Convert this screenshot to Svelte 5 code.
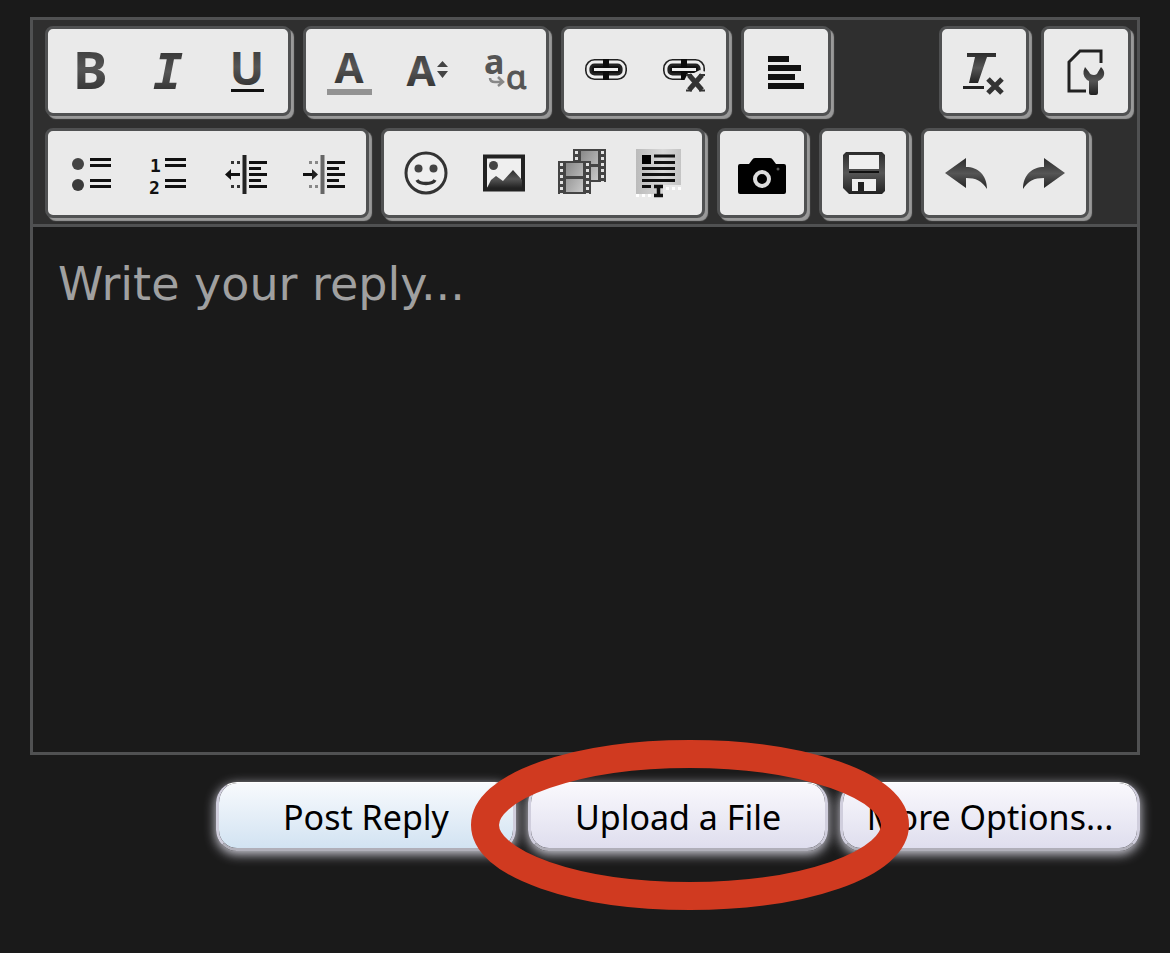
<script>
  // Every icon is drawn on a 78-unit canvas whose origin is the middle of its button.
  const chain = `
    <rect x="-17.500" y="-8.500" width="35" height="14" rx="6" fill="#111" stroke="#222" stroke-width="7"/>
    <rect x="-18" y="-9" width="36" height="15" rx="6.500" fill="none" stroke="#eee" stroke-width="2.800"/>
    <rect x="-3" y="-12" width="6" height="21" fill="#0c0c0c"/>
    <rect x="-12" y="-3" width="24" height="3" fill="#eee"/>`;
  const textLines = `<path d="M3-10.5H21M3-4.5H15M3 1.5H21M3 7.5H15M3 13.5H21" stroke="#111" stroke-width="3"/>`;
  const film = `
    <rect width="33" height="33" fill="#444"/>
    <path d="M8 2H25V15H8ZM8 18H25V31H8Z" fill="url(#frame)"/>
    <path d="M3.500 2V33M29.500 2V33" stroke="#e2e2e2" stroke-width="3" stroke-dasharray="3 3"/>`;
  const arrow = `<path d="M-21 0L0-15V-6C12-6 21 2 21 16C16 8 10 5 0 5V15Z" fill="url(#ink)"/>`;
  const sans = `font-family="Noto Sans, Open Sans, sans-serif" font-weight="700"`;
  const mono = `font-family="DejaVu Sans Mono, monospace" font-weight="700"`;

  const icons = {
    bold: `<text x="-17" y="18" font-size="52" ${sans} fill="url(#ink)">B</text>`,
    italic: `<text x="-15" y="18" font-size="50" font-style="italic" ${mono} fill="url(#ink)">I</text>`,
    underline: `<text x="1" y="14" font-size="46" text-anchor="middle" ${sans} fill="url(#ink)">U</text>
      <path d="M-15 19.500H18" stroke="#111" stroke-width="3"/>`,
    color: `<text x="1" y="12" font-size="42" text-anchor="middle" ${sans} fill="url(#ink)">A</text>
      <path d="M-21 21H24" stroke="#939393" stroke-width="6"/>`,
    size: `<text x="-5" y="15" font-size="42" text-anchor="middle" ${sans} fill="url(#ink)">A</text>
      <path d="M11-4L16.500-10L22-4ZM11 0H22L16.500 7Z" fill="#444"/>`,
    font: `<text x="-20" y="3" font-size="34" ${sans} fill="#555">a</text>
      <text x="2" y="18" font-size="33" font-family="Noto Sans, sans-serif" fill="#555" stroke="#555">ɑ</text>
      <path d="M-14 7Q-14 11-9 11H-2M-6 6L-1 11L-6 15" fill="none" stroke="#888" stroke-width="2.500"/>`,
    link: chain,
    unlink: `${chain}
      <path d="M0 10L4 2H10L16-1L22 1V23H2Z" fill="#eaeaea"/>
      <path d="M5 4L18 19M18 4L5 19" stroke="#333" stroke-width="5"/>
      <path d="M2 19.500H8M15 19.500H21M2 4H8M15 4H21" stroke="#333" stroke-width="2"/>`,
    align: `<path d="M-18-12H3M-18-3H15M-18 6H9M-18 15H18" stroke="#111" stroke-width="6"/>`,
    clear: `<path d="M-17-18H12V-14H3L-6 12H-15L-9-14H-17Z" fill="url(#ink)"/>
      <path d="M-21 16.500H0" stroke="#222" stroke-width="3"/>
      <path d="M4 8L18 22M18 8L4 22" stroke="#333" stroke-width="5"/>`,
    source: `<path d="M0 20H-17V-9L-6-20H15V-8" fill="none" stroke="#222" stroke-width="3"/>
      <path d="M-1-4Q-5 4 1 9L3 10V22Q3 24 5 24H10Q12 24 12 22V10Q17 8 18 4Q19 0 15-4L12 1Q11 4 8 4Q4 4 3 1Z" fill="url(#ink)"/>`,
    bullets: `<circle cx="-12" cy="-9" r="6" fill="#444"/><circle cx="-12" cy="12" r="6" fill="#3a3a3a"/>
      <path d="M0-13.500H21M0-7.500H21M0 7.500H21M0 13.500H21" stroke="#111" stroke-width="3"/>`,
    numbers: `<text x="-18" y="-1" font-size="18" ${mono} fill="#111">1</text>
      <text x="-19" y="21" font-size="18" ${mono} fill="#111">2</text>
      <path d="M-3-13.500H18M-3-7.500H18M-3 7.500H18M-3 13.500H18" stroke="#111" stroke-width="3"/>`,
    outdent: `${textLines}<path d="M-1.500-18V21" stroke="#222" stroke-width="4"/>
      <path d="M-6 1.500H-18" stroke="#111" stroke-width="3"/><path d="M-21 1.500L-15-4V7Z" fill="#111"/>
      <path d="M-15-10.500H-12M-9-10.500H-6M-15 13.500H-12M-9 13.500H-6" stroke="#333" stroke-width="3"/>`,
    indent: `${textLines}<path d="M-1.500-18V21" stroke="#666" stroke-width="4"/>
      <path d="M-21 1.500H-9" stroke="#111" stroke-width="3"/><path d="M-6 1.500L-12-4V7Z" fill="#222"/>
      <path d="M-15-10.500H-12M-9-10.500H-6M-15 13.500H-12M-9 13.500H-6" stroke="#888" stroke-width="3"/>`,
    smile: `<circle r="20" fill="#efefef" stroke="#333" stroke-width="3"/>
      <circle cx="-7.500" cy="-4.500" r="4" fill="#444"/><circle cx="7.500" cy="-4.500" r="4" fill="#444"/>
      <path d="M-9 7Q-7 10.500 0 10.500Q7 10.500 9 7" fill="none" stroke="#333" stroke-width="3.500"/>`,
    image: `<rect x="-19" y="-16.500" width="38" height="33" fill="#efefef" stroke="#222" stroke-width="4"/>
      <circle cx="-10.500" cy="-7.500" r="4.500" fill="#444"/>
      <path d="M-17 15L-13 7L-8 3L-1 8L9-3L18 7V15Z" fill="url(#ink)"/>`,
    media: `<g transform="translate(-9 -24)">${film}</g><g transform="translate(-24 -12)">${film}</g>`,
    article: `<path d="M-24-24H21V12H3V21H-24Z" fill="url(#paper)"/>
      <path d="M-24 22.500H-7M6 15.500H21" stroke="#fff" stroke-width="3" stroke-dasharray="3 3"/>
      <path d="M-18-18H-9V-9H-18Z" fill="#000"/>
      <path d="M-6-17H15M-6-10.500H15M-18-4.500H15M-18 1.500H15M-18 7.500H15M-18 13.500H-9" stroke="#111" stroke-width="3"/>
      <path d="M-6 13.500H3M-6 22.500H3M-1.500 13.500V22.500" stroke="#111" stroke-width="3.500"/>`,
    camera: `<path d="M-24-7Q-24-9-22-9H-13L-10-13Q-9-15-7-15H8Q10-15 11-13L14-9H22Q24-9 24-7V19Q24 21 22 21H-22Q-24 21-24 19Z" fill="#000"/>
      <circle cy="6" r="7" fill="none" stroke="#ddd" stroke-width="4"/><circle cx="16" cy="-4" r="1.500" fill="#555"/>`,
    save: `<path d="M-18-21H18L21-18V18L18 21H-15L-21 15V-18Z" fill="url(#ink)"/>
      <path d="M-15-18H15V-4H-15Z" fill="#efefef"/><path d="M-15-1H15" stroke="#111" stroke-width="2"/>
      <path d="M-12 6H12V18H-12Z" fill="#efefef"/><path d="M-6 9H0V18H-6Z" fill="#222"/>`,
    undo: arrow,
    redo: `<g transform="scale(-1 1)">${arrow}</g>`,
  };

  const rows = [
    [
      [['bold', 'Bold'], ['italic', 'Italic'], ['underline', 'Underline']],
      [['color', 'Text Color'], ['size', 'Font Size'], ['font', 'Font Family']],
      [['link', 'Insert Link'], ['unlink', 'Unlink']],
      [['align', 'Alignment']],
      [['clear', 'Remove Formatting']],
      [['source', 'Use BB Code Editor']],
    ],
    [
      [['bullets', 'Unordered List'], ['numbers', 'Ordered List'], ['outdent', 'Outdent'], ['indent', 'Indent']],
      [['smile', 'Smilies'], ['image', 'Image'], ['media', 'Media'], ['article', 'Insert']],
      [['camera', 'Camera']],
      [['save', 'Drafts']],
      [['undo', 'Undo'], ['redo', 'Redo']],
    ],
  ];
</script>

<svg class="defs" width="0" height="0" aria-hidden="true">
  <defs>
    <linearGradient id="ink" x1="0" y1="0" x2="0" y2="1">
      <stop offset="0" stop-color="#2c2c2c" />
      <stop offset="0.5" stop-color="#555" />
      <stop offset="1" stop-color="#222" />
    </linearGradient>
    <linearGradient id="frame" x1="0" y1="0" x2="1" y2="1">
      <stop offset="0" stop-color="#888" />
      <stop offset="1" stop-color="#c8c8c8" />
    </linearGradient>
    <linearGradient id="paper" x1="0" y1="0" x2="1" y2="0">
      <stop offset="0" stop-color="#bbb" />
      <stop offset="0.6" stop-color="#d8d8d8" />
      <stop offset="1" stop-color="#c4c4c4" />
    </linearGradient>
  </defs>
</svg>

<main>
  <form onsubmit={(e) => e.preventDefault()}>
    <div class="editor">
      <div class="toolbar" role="toolbar" aria-label="Formatting">
        {#each rows as groups}
          <div class="row">
            {#each groups as group}
              <div class="group" class:push={group[0][0] === 'clear'}>
                {#each group as [icon, label]}
                  <button type="button" class="tool" aria-label={label}>
                    <svg viewBox="-39 -39 78 78" aria-hidden="true">{@html icons[icon]}</svg>
                  </button>
                {/each}
              </div>
            {/each}
          </div>
        {/each}
      </div>
      <textarea aria-label="Reply" placeholder="Write your reply..."></textarea>
    </div>

    <div class="actions">
      <button type="submit" class="action primary">Post Reply</button>
      <div class="marked">
        <button type="button" class="action">Upload a File</button>
        <svg class="ring" viewBox="0 0 440 170" aria-hidden="true">
          <ellipse cx="220" cy="85" rx="205" ry="71" />
        </svg>
      </div>
      <button type="button" class="action">More Options...</button>
    </div>
  </form>
</main>

<style>
  :global(body) {
    margin: 0;
    background: #1a1a1a;
  }

  .defs {
    position: absolute;
  }

  main {
    box-sizing: border-box;
    min-height: 100vh;
    padding: 17px 30px;
  }

  .editor {
    border: 3px solid #505152;
  }

  .toolbar {
    display: flex;
    flex-direction: column;
    gap: 12px;
    padding: 6px 6px 6px 12px;
    background: #2f2f2f;
    border-bottom: 3px solid #505152;
  }

  .row {
    display: flex;
    flex-wrap: wrap;
    gap: 12px;
  }

  .group {
    display: flex;
    padding: 3px;
    background: #eaeaea;
    border: 3px solid #505152;
    border-radius: 8px;
    box-shadow: 3px 3px 1px #999;
  }

  .push {
    margin-left: auto;
  }

  .tool {
    display: grid;
    place-items: center;
    width: 78px;
    height: 78px;
    padding: 0;
    background: none;
    border: 0;
  }

  .tool svg {
    width: 78px;
    height: 78px;
    overflow: visible;
  }

  textarea {
    display: block;
    box-sizing: border-box;
    width: 100%;
    height: 525px;
    padding: 30px 25px;
    background: #1a1a1a;
    border: 0;
    outline: 0;
    resize: none;
    color: #ddd;
    font: 46px/54px "DejaVu Sans", sans-serif;
  }

  textarea::placeholder {
    color: #a0a0a0;
    opacity: 1;
  }

  .actions {
    display: flex;
    justify-content: flex-end;
    gap: 12px;
    margin-top: 27px;
  }

  .marked {
    position: relative;
  }

  .action {
    width: 300px;
    height: 69px;
    padding: 2px 0 0;
    border: 3px solid #d0cedd;
    border-top-color: #fff;
    border-bottom-color: #b0afb9;
    border-width: 1px 3px 3px;
    border-radius: 21px;
    background: linear-gradient(#faf9fd, #dfdeee) padding-box;
    box-shadow: 0 3px 12px #d6d5e0;
    color: #000;
    font: 34px/60px "Noto Sans", "Open Sans", sans-serif;
  }

  .primary {
    background: linear-gradient(#f8fafd, #d2e3f2) padding-box;
  }

  .ring {
    position: absolute;
    z-index: 1;
    top: -42px;
    left: -58px;
    width: 440px;
    height: 170px;
    pointer-events: none;
  }

  .ring ellipse {
    fill: none;
    stroke: #d03a20;
    stroke-width: 28px;
  }
</style>
